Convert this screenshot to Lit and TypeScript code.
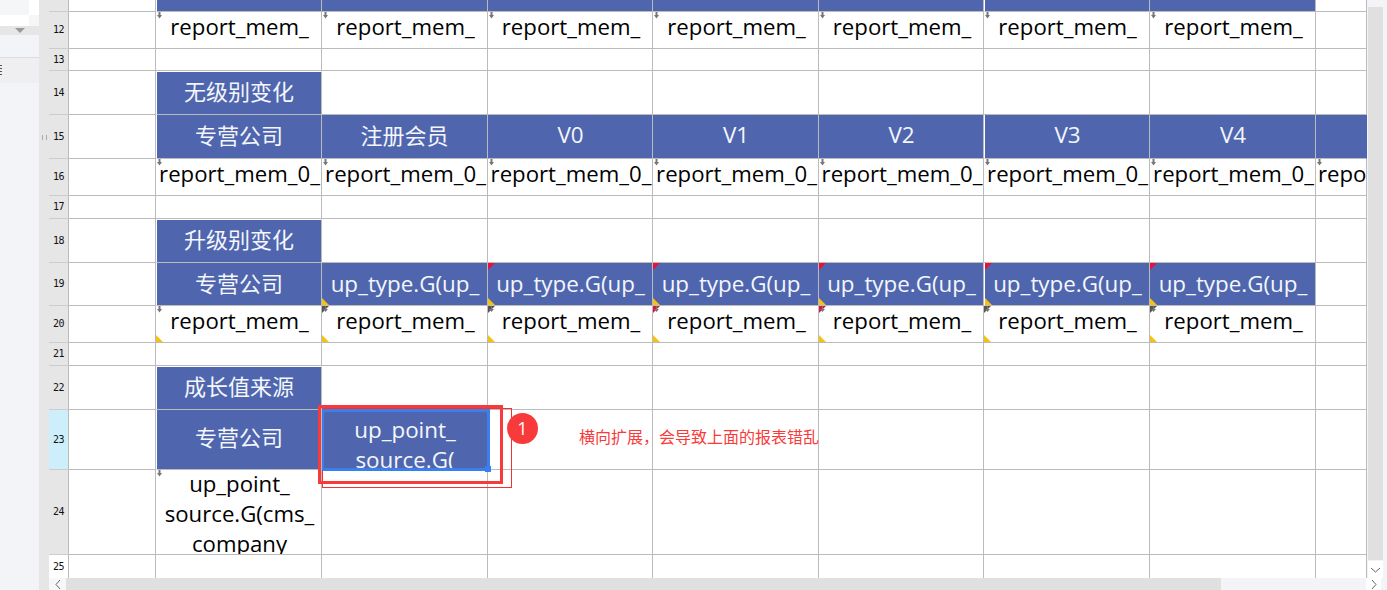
import { LitElement, html, css, nothing } from "lit";
import { customElement } from "lit/decorators.js";

type Cell = { t?: string; h?: boolean; lat?: boolean; mark?: string; yb?: boolean; red?: boolean; arrow?: boolean; nudge?: string };

const G = "report_mem_";
const r12: Cell[] = [0,1,2,3,4,5,6].map(() => ({ t: G + "\nchange.G(", arrow: true }));
const second = ["G(", "G(id", "G(cms_d", "G(id_l", "G(cl", "G(id", "G(cl"];
const r16: Cell[] = second.map((s) => ({ t: "report_mem_0_\n" + s, arrow: true }));
const up = (i: number): Cell => ({ t: "up_type.G(up_\ntype.G(", h: true, lat: true, yb: true, red: i > 0 });
const markColors = ["#555", "#555", "#d5144a", "#d5144a", "#555", "#555"];

const ROWS: { n: number; cls?: string; h: number; cells: Cell[] }[] = [
  { n: 0, h: 12, cells: [{ h: true }, { h: true }, { h: true }, { h: true }, { h: true }, { h: true }, { h: true }] },
  { n: 12, h: 37, cells: r12 },
  { n: 13, h: 22, cells: [] },
  { n: 14, h: 44, cells: [{ t: "无级别变化", h: true }] },
  {
    n: 15,
    h: 44,
    cells: [
      { t: "专营公司", h: true },
      { t: "注册会员", h: true },
      { t: "V0", h: true, lat: true },
      { t: "V1", h: true, lat: true },
      { t: "V2", h: true, lat: true },
      { t: "V3", h: true, lat: true },
      { t: "V4", h: true, lat: true },
      { h: true },
    ],
  },
  { n: 16, h: 37, cells: [...r16, { t: "report_mem_0_", arrow: true }] },
  { n: 17, h: 23, cells: [] },
  { n: 18, h: 44, cells: [{ t: "升级别变化", h: true }] },
  {
    n: 19,
    h: 43,
    cells: [{ t: "专营公司", h: true }, up(0), up(1), up(2), up(3), up(4), up(5)],
  },
  {
    n: 20,
    h: 37,
    cells: [
      { t: G + "\nchange.G(", arrow: true, yb: true },
      ...markColors.map((c) => ({ t: G + "\nchange.G(", mark: c, arrow: true, yb: true })),
    ],
  },
  { n: 21, h: 23, cells: [] },
  { n: 22, h: 44, cells: [{ t: "成长值来源", h: true }] },
  {
    n: 23,
    cls: "sel",
    h: 60,
    cells: [
      { t: "专营公司", h: true, nudge: "mid" },
      { t: "up_point_\nsource.G(", h: true, lat: true, nudge: "two" },
    ],
  },
  { n: 24, h: 85, cells: [{ t: "up_point_\nsource.G(cms_\ncompany", arrow: true }] },
  { n: 25, cls: "plain", h: 23, cells: [] },
];

const COLS = 8;

@customElement("app-root")
export class AppRoot extends LitElement {
  static styles = css`
    :host {
      display: block;
      width: 1387px;
      height: 590px;
      overflow: hidden;
      background: #fff;
      font-family: "Open Sans", "Noto Sans CJK SC", sans-serif;
    }
    .root {
      display: flex;
      width: 1387px;
      height: 590px;
    }
    .left {
      width: 39px;
      flex: none;
      background: #f3f4f7;
      display: flex;
      flex-direction: column;
    }
    .patch {
      display: flex;
    }
    .patch i {
      display: block;
    }
    .p1 {
      height: 15px;
    }
    .p2 {
      height: 11px;
    }
    .p1 i:first-child {
      width: 29px;
      background: #f5f6f8;
    }
    .p1 i:last-child {
      flex: 1;
      background: #fff;
    }
    .p2 i:first-child {
      width: 29px;
      background: #fff;
    }
    .p2 i:last-child {
      flex: 1;
      background: #f5f6f8;
    }
    .bar {
      height: 9px;
      background: #e6e6e6;
      display: flex;
      justify-content: center;
      align-items: center;
    }
    .tri {
      width: 0;
      height: 0;
      border-left: 5px solid transparent;
      border-right: 5px solid transparent;
      border-top: 5px solid #999;
    }
    .gap {
      height: 22px;
      border-bottom: 1px solid #dcdcdc;
    }
    .tab {
      height: 25px;
      background: #efeff1;
      display: flex;
      align-items: center;
    }
    .tab span {
      display: block;
      width: 2px;
      height: 12px;
      background: repeating-linear-gradient(#555 0 1px, transparent 1px 3px);
    }
    .strip {
      width: 10px;
      flex: none;
      background: #e6e6e6;
      display: flex;
      justify-content: center;
      padding-top: 135px;
      box-sizing: border-box;
    }
    .grip {
      width: 3px;
      height: 5px;
      border-left: 1px solid #aaa;
      border-right: 1px solid #aaa;
    }
    .main {
      width: 1338px;
      flex: none;
      display: flex;
      flex-direction: column;
      position: relative;
    }
    .top {
      display: flex;
      height: 578px;
    }
    .sheet {
      width: 1318px;
      flex: none;
      display: grid;
      grid-template-columns: 20px 87px 166px 166px 165px 166px 165px 166px 166px 51px;
      align-content: start;
      overflow: hidden;
    }
    .rh {
      background: #e6e6e6;
      border-right: 1px solid #bbb;
      border-bottom: 1px solid #ccc;
      font: 10px/1 "DejaVu Sans Mono", monospace;
      color: #111;
      display: flex;
      align-items: center;
      justify-content: center;
      letter-spacing: -0.5px;
      box-sizing: border-box;
    }
    .rh.sel {
      background: #cdeffb;
    }
    .rh.plain {
      background: #fff;
      border-bottom: none;
    }
    .c {
      position: relative;
      box-sizing: border-box;
      border-right: 1px solid #bbb;
      border-bottom: 1px solid #bbb;
      overflow: hidden;
      background: #fff;
      color: #000;
      font-size: 22.2px;
      line-height: 30px;
      text-align: center;
      padding-left: 2px;
    }
    .c .txt {
      display: block;
      white-space: pre;
      margin-top: -1px;
    }
    .c.tall .txt {
      margin-top: -1px;
    }
    .c.peek {
      line-height: 29px;
    }
    .c.peek .txt {
      margin-top: 0;
    }
    .c.last {
      text-align: left;
      padding-left: 2px;
      padding-top: 1px;
    }
    .c.noline {
      border-bottom: none;
    }
    .c.h {
      background: #4f66ae;
      color: #f4f6fb;
      padding-top: 6px;
      padding-left: 0;
      font-size: 22px;
    }
    .c.h.lat {
      font-size: 22.4px;
      padding-left: 1px;
    }
    .c.h.peek {
      line-height: 29px;
      padding-top: 6px;
    }
    .c.h.wl {
      border-left: 1px solid #fff;
    }
    .c.h.first {
      border-top: 1px solid #fff;
      padding-top: 5px;
    }
    .c.h.edge {
      border-right-color: #4f66ae;
    }
    .c.h.mid {
      padding-top: 13px;
    }
    .c.h.two {
      padding-top: 6px;
    }
    .arrow {
      position: absolute;
      left: 0;
      top: 0;
      width: 7px;
      height: 7px;
    }
    .yb {
      position: absolute;
      left: 0;
      bottom: 0;
      width: 0;
      height: 0;
      border-left: 7px solid #f6c20f;
      border-top: 7px solid transparent;
    }
    .rt {
      position: absolute;
      left: 0;
      top: 0;
      width: 0;
      height: 0;
      border-top: 7px solid #e8113c;
      border-right: 7px solid transparent;
    }
    .vbar {
      flex: 1;
      background: #f3f4f7;
      display: flex;
      flex-direction: column;
      padding-left: 1px;
    }
    .vgap {
      height: 7px;
    }
    .vthumb {
      width: 15px;
      height: 553px;
      background: #e0e0e0;
    }
    .vbtn {
      width: 15px;
      height: 17px;
      background: #fff;
      margin-top: 1px;
      display: flex;
      align-items: center;
      justify-content: center;
    }
    .hbar {
      height: 12px;
      background: #f3f4f7;
      display: flex;
    }
    .hbtn {
      width: 17px;
      height: 12px;
      flex: none;
      background: #f7f7f9;
      display: flex;
      align-items: center;
      justify-content: center;
    }
    .hthumb {
      width: 1155px;
      flex: none;
      background: #e0e0e0;
    }
    .hspace {
      width: 145px;
      flex: none;
    }
    .hbtn.r {
      background: #fff;
      width: 15px;
    }
    .overlay {
      position: absolute;
      inset: 0;
      pointer-events: none;
    }
    .selbox {
      position: absolute;
      left: 273px;
      top: 409px;
      width: 168px;
      height: 62px;
      box-sizing: border-box;
      border: 3px solid #3a7fee;
      border-left-width: 2px;
    }
    .handle {
      position: absolute;
      right: -4px;
      bottom: -4px;
      width: 6px;
      height: 6px;
      background: #3a7fee;
    }
    .thick {
      position: absolute;
      left: 269px;
      top: 405px;
      width: 185px;
      height: 79px;
      box-sizing: border-box;
      border: 3px solid #f93a3a;
    }
    .thin {
      position: absolute;
      left: 273px;
      top: 408px;
      width: 190px;
      height: 80px;
      box-sizing: border-box;
      border: 1px solid #f53030;
    }
    .badge {
      position: absolute;
      left: 458px;
      top: 413px;
      width: 31px;
      height: 31px;
      border-radius: 50%;
      background: #f93a3a;
      color: #fff;
      font: 18px/30px "Open Sans", sans-serif;
      text-align: center;
    }
    .note {
      position: absolute;
      left: 530px;
      top: 425px;
      font: 16px/22px "Noto Sans CJK SC", sans-serif;
      color: #f93a3a;
      white-space: pre;
    }
  `;

  private cellTpl(cell: Cell | undefined, colIdx: number, row: (typeof ROWS)[number]) {
    const isLast = colIdx === COLS - 1;
    const c = cell ?? {};
    const cls = ["c"];
    if (isLast) cls.push("last");
    if (row.n === 25) cls.push("noline");
    if (row.n === 24) cls.push("tall");
    if ((row.n === 12 || row.n === 16 || row.n === 20) && c.t && c.t.includes("\n")) cls.push("peek");
    if (row.n === 19 && c.lat) cls.push("peek");
    if (c.h) cls.push("h");
    if (c.lat) cls.push("lat");
    if (c.h && (colIdx === 0 || colIdx === 5)) cls.push("wl");
    if (c.h && (row.n === 14 || row.n === 18 || row.n === 22)) cls.push("first");
    if (c.h && row.n === 15 && isLast) cls.push("edge");
    if (c.nudge) cls.push(c.nudge);
    return html`<div class=${cls.join(" ")}>
      ${c.t ? html`<span class="txt">${c.t}</span>` : nothing}
      ${c.red ? html`<i class="rt"></i>` : nothing}
      ${c.yb ? html`<i class="yb"></i>` : nothing}
      ${c.mark
        ? html`<svg class="arrow" viewBox="0 0 7 7"><path d="M0 0h7L0 7z" fill=${c.mark}></path><path d="M3 0h1v3h2L3.5 6 1 3h2z" fill="#777"></path></svg>`
        : c.arrow
          ? html`<svg class="arrow" viewBox="0 0 7 7"><path d="M2.5 0h2v3H6L3.5 6.5 1 3h1.5z" fill="#777"></path></svg>`
          : nothing}
    </div>`;
  }

  render() {
    const template = ROWS.map((r) => r.h + "px").join(" ");
    return html`<div class="root">
      <div class="left">
        <div class="patch p1"><i></i><i></i></div>
        <div class="patch p2"><i></i><i></i></div>
        <div class="bar"><span class="tri"></span></div>
        <div class="gap"></div>
        <div class="tab"><span></span></div>
      </div>
      <div class="strip"><div class="grip"></div></div>
      <div class="main">
        <div class="top">
          <div class="sheet" style="grid-template-rows:${template}">
            ${ROWS.map(
              (r) => html`<div class="rh ${r.cls ?? ""}">${r.n || ""}</div>
                <div class="c ${r.n === 25 ? "noline" : ""}"></div>
                ${Array.from({ length: COLS }, (_, i) => this.cellTpl(r.cells[i], i, r))}`,
            )}
          </div>
          <div class="vbar">
            <div class="vgap"></div>
            <div class="vthumb"></div>
            <div class="vbtn">
              <svg width="11" height="6" viewBox="0 0 11 6"><path d="M1 1l4.5 4L10 1" fill="none" stroke="#666" stroke-width="1"></path></svg>
            </div>
          </div>
        </div>
        <div class="hbar">
          <div class="hbtn">
            <svg width="6" height="11" viewBox="0 0 6 11"><path d="M5 1L1 5.5 5 10" fill="none" stroke="#666" stroke-width="1"></path></svg>
          </div>
          <div class="hthumb"></div>
          <div class="hspace"></div>
          <div class="hbtn r">
            <svg width="6" height="11" viewBox="0 0 6 11"><path d="M1 1l4 4.5L1 10" fill="none" stroke="#666" stroke-width="1"></path></svg>
          </div>
        </div>
        <div class="overlay">
          <div class="thin"></div>
          <div class="selbox"><i class="handle"></i></div>
          <div class="thick"></div>
          <div class="badge">1</div>
          <div class="note">横向扩展，会导致上面的报表错乱</div>
        </div>
      </div>
    </div>`;
  }
}
